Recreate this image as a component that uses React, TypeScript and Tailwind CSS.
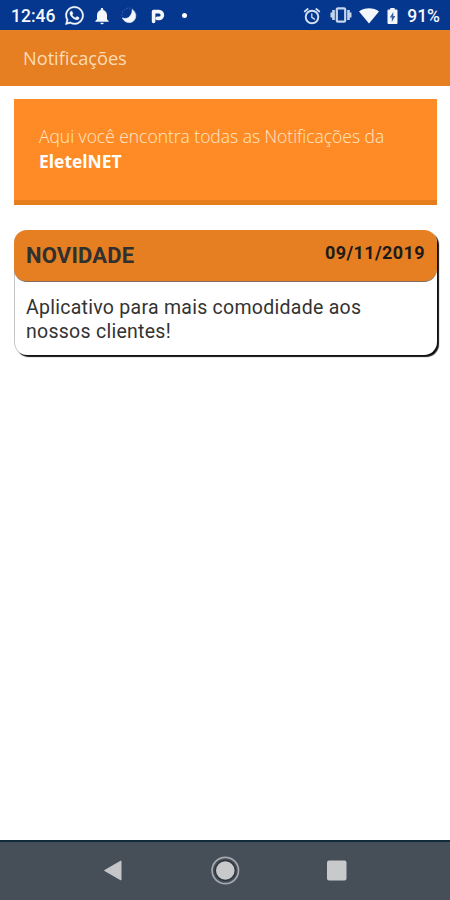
import React from 'react';
import { FaWhatsapp } from 'react-icons/fa';
import { MdNotifications } from 'react-icons/md';

interface Notification {
    id: number;
    title: string;
    date: string;
    message: string;
}

const notifications: Notification[] = [
    {
        id: 1,
        title: 'NOVIDADE',
        date: '09/11/2019',
        message: 'Aplicativo para mais comodidade aos nossos clientes!',
    },
];

const StatusBar: React.FC = () => (
    <div className="flex h-[30px] items-center justify-between bg-[#05378f] pl-[11px] pr-[10px] pt-[2px] font-['Roboto',sans-serif] text-[17.5px] font-medium text-[#f4f7fc]">
        <div className="flex items-center">
            <span className="w-[53px] whitespace-nowrap">12:46</span>
            <FaWhatsapp className="mb-[2px] h-[21px] w-[21px]" stroke="currentColor" strokeWidth="8" />
            <MdNotifications className="ml-[7px] h-[20px] w-[20px]" />
            <svg className="ml-[8px] h-[18px] w-[18px]" viewBox="0 0 18 18">
                <circle cx="9" cy="8" r="7" fill="none" stroke="#4468b0" strokeWidth="1" strokeDasharray="1.5 1.5" />
                <path d="M12 2.500C17 5.500 17 13 11.500 15.200C7.500 16.500 4 14.500 2.500 11C5 12 8.500 11.500 10 9C11.500 7 12.500 5 12 2.500z" fill="currentColor" stroke="currentColor" strokeWidth="0.600" />
            </svg>
            <svg className="ml-[13px] mb-px h-[18px] w-[15px]" viewBox="0 0 15 18">
                <path d="M2.600 14.500V4.600H8a3.400 3.400 0 0 1 0 6.800H6.300" fill="none" stroke="currentColor" strokeWidth="3.600" strokeLinecap="round" strokeLinejoin="round" />
            </svg>
            <span className="mb-[2px] ml-[16px] h-[5px] w-[5px] rounded-full bg-white" />
        </div>
        <div className="flex items-center">
            <svg className="mb-px h-[18px] w-[18px] text-[#d5e0f2]" viewBox="0 0 18 18" fill="none" stroke="currentColor" strokeLinecap="round">
                <circle cx="9" cy="10" r="6.300" strokeWidth="1.900" />
                <path d="M1.700 4.500 4.700 2M16.300 4.500 13.300 2" strokeWidth="1.800" />
                <path d="M8.800 6.800v3.500l2.700 1.800" strokeWidth="1.300" />
            </svg>
            <svg className="ml-[9px] mb-[2px] h-[18px] w-[22px] text-[#c8d6ec]" viewBox="0 0 22 18">
                <rect x="6.800" y="2.300" width="8.400" height="13.400" rx="1.200" fill="none" stroke="currentColor" strokeWidth="2.200" />
                <path d="M4.800 4v10H2.200V11.500H0.500v-5H2.200V4zM17.200 4v10h2.600V11.500h1.700v-5h-1.700V4z" fill="currentColor" />
            </svg>
            <svg className="ml-[7px] h-[16px] w-[20px]" viewBox="0 0 20 16">
                <path d="M0 3.500C5.500-.8 14.500-.8 20 3.500L10 15.500z" fill="currentColor" />
            </svg>
            <svg className="ml-[8px] h-[18px] w-[11px]" viewBox="0 0 11 18">
                <path d="M1.300 2.500H3.300V1h4.400v1.500h2q.8 0 .8.800V16q0 1-1 1h-8q-1 0-1-1V3.300q0-.8.800-.8z" fill="currentColor" />
                <path d="M6.300 5 2.800 10.500h2V15l3.500-6h-2z" fill="#3b5f9f" />
            </svg>
            <span className="ml-[9px]">91%</span>
        </div>
    </div>
);

const NotificationCard: React.FC<{ notification: Notification }> = ({ notification }) => (
    <div className="h-[125px] rounded-[13px] border-l border-[#c6c6c6] bg-white font-['Roboto',sans-serif] shadow-[2px_2px_1px_#111]">
        <div className="-ml-px flex h-[52px] justify-between rounded-[13px] border-b border-[#806c60] bg-[#e67e22] pl-[12px] pr-[12px]">
            <h2 className="pt-[11px] text-[22px] leading-[30px] font-bold tracking-[0.2px] text-[#303030]">{notification.title}</h2>
            <span className="pt-[12px] text-[18px] leading-[22px] font-bold tracking-[0.4px] text-[#1d1b19]">{notification.date}</span>
        </div>
        <p className="w-[360px] pl-[11px] pt-[14px] text-[19.5px] leading-6 tracking-[0.27px] text-[#333]">{notification.message}</p>
    </div>
);

const NavigationBar: React.FC = () => (
    <div className="flex h-[60px] justify-between border-t-2 border-[#102b3a] bg-[#464e58] pl-[102px] pr-[102px] pt-[14px]">
        <svg className="h-[30px] w-[22px]" viewBox="0 0 22 30">
            <path d="M2.500 14.500 19 5v19z" fill="#c4c6c9" stroke="#c4c6c9" strokeLinejoin="round" />
        </svg>
        <svg className="h-[30px] w-[30px]" viewBox="0 0 30 30">
            <circle cx="15.300" cy="14.500" r="13.200" fill="none" stroke="#a4a9af" strokeWidth="1.700" />
            <circle cx="15.300" cy="14.500" r="10" fill="#c8c9cb" stroke="#30363e" strokeWidth="1.400" />
        </svg>
        <svg className="h-[30px] w-[22px]" viewBox="0 0 22 30">
            <rect x="1" y="4.500" width="19.500" height="20" rx="2" fill="#c8c9cb" />
        </svg>
    </div>
);

const App: React.FC = () => {
    return (
        <div className="flex h-[900px] w-[450px] flex-col overflow-hidden bg-white">
            <StatusBar />
            <header className="flex h-[56px] items-center bg-[#e67e22] pl-[23px] pt-[2px] font-['Open_Sans',sans-serif] text-[18.2px] text-[#fbdcb5]">
                <h1>Notificações</h1>
            </header>
            <main className="flex-1 pl-[14px] pr-[13px] pt-[13px]">
                <div className="h-[106px] border-b-[5px] border-[#e67e1e] bg-[#ff8b26] pl-[25px] pt-[25px] font-['Open_Sans',sans-serif] text-[17.45px] leading-[25px]">
                    <p className="font-light whitespace-nowrap text-[#ffe8c6]">Aqui você encontra todas as Notificações da</p>
                    <p className="font-bold text-white">EletelNET</p>
                </div>
                <div className="mt-[25px]">
                    {notifications.map((notification) => (
                        <NotificationCard key={notification.id} notification={notification} />
                    ))}
                </div>
            </main>
            <NavigationBar />
        </div>
    );
};

export default App;
